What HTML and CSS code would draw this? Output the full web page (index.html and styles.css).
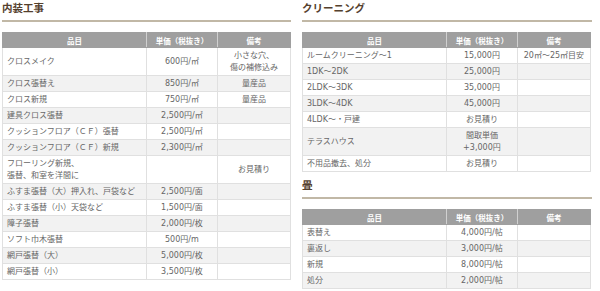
FILE: index.html
```html
<!DOCTYPE html>
<html lang="ja">
<head>
    <meta charset="UTF-8">
    <meta name="viewport" content="width=device-width, initial-scale=1.0">
    <title>料金表</title>
    <link rel="stylesheet" href="styles.css">
</head>
<body>
    <div class="price-page">
        <div class="price-column">
            <h2 class="section-title">内装工事</h2>
            <table class="price-table">
                <thead>
                    <tr><th class="col-item">品目</th><th class="col-price">単価（税抜き）</th><th class="col-note">備考</th></tr>
                </thead>
                <tbody>
                    <tr><td>クロスメイク</td><td class="center">600円/㎡</td><td class="center">小さな穴、<br>傷の補修込み</td></tr>
                    <tr><td>クロス張替え</td><td class="center">850円/㎡</td><td class="center">量産品</td></tr>
                    <tr><td>クロス新規</td><td class="center">750円/㎡</td><td class="center">量産品</td></tr>
                    <tr><td>建具クロス張替</td><td class="center">2,500円/㎡</td><td></td></tr>
                    <tr><td>クッションフロア（ＣＦ）張替</td><td class="center">2,500円/㎡</td><td></td></tr>
                    <tr><td>クッションフロア（ＣＦ）新規</td><td class="center">2,300円/㎡</td><td></td></tr>
                    <tr><td>フローリング新規、<br>張替、和室を洋間に</td><td></td><td class="center">お見積り</td></tr>
                    <tr><td>ふすま張替（大）押入れ、戸袋など</td><td class="center">2,500円/面</td><td></td></tr>
                    <tr><td>ふすま張替（小）天袋など</td><td class="center">1,500円/面</td><td></td></tr>
                    <tr><td>障子張替</td><td class="center">2,000円/枚</td><td></td></tr>
                    <tr><td>ソフト巾木張替</td><td class="center">500円/m</td><td></td></tr>
                    <tr><td>網戸張替（大）</td><td class="center">5,000円/枚</td><td></td></tr>
                    <tr><td>網戸張替（小）</td><td class="center">3,500円/枚</td><td></td></tr>
                </tbody>
            </table>
        </div>

        <div class="price-column">
            <h2 class="section-title">クリーニング</h2>
            <table class="price-table">
                <thead>
                    <tr><th class="col-item">品目</th><th class="col-price">単価（税抜き）</th><th class="col-note">備考</th></tr>
                </thead>
                <tbody>
                    <tr><td>ルームクリーニング～1</td><td class="center">15,000円</td><td class="center">20㎡～25㎡目安</td></tr>
                    <tr><td>1DK～2DK</td><td class="center">25,000円</td><td></td></tr>
                    <tr><td>2LDK～3DK</td><td class="center">35,000円</td><td></td></tr>
                    <tr><td>3LDK～4DK</td><td class="center">45,000円</td><td></td></tr>
                    <tr><td>4LDK～・戸建</td><td class="center">お見積り</td><td></td></tr>
                    <tr><td>テラスハウス</td><td class="center">間取単価<br>+3,000円</td><td></td></tr>
                    <tr><td>不用品撤去、処分</td><td class="center">お見積り</td><td></td></tr>
                </tbody>
            </table>

            <h2 class="section-title section-title-next">畳</h2>
            <table class="price-table">
                <thead>
                    <tr><th class="col-item">品目</th><th class="col-price">単価（税抜き）</th><th class="col-note">備考</th></tr>
                </thead>
                <tbody>
                    <tr><td>表替え</td><td class="center">4,000円/帖</td><td></td></tr>
                    <tr><td>裏返し</td><td class="center">3,000円/帖</td><td></td></tr>
                    <tr><td>新規</td><td class="center">8,000円/帖</td><td></td></tr>
                    <tr><td>処分</td><td class="center">2,000円/帖</td><td></td></tr>
                </tbody>
            </table>
        </div>
    </div>
</body>
</html>
```

FILE: styles.css
```css
* {
    margin: 0;
    padding: 0;
    box-sizing: border-box;
}

body {
    background-color: #ffffff;
    font-family: "DejaVu Sans", "Noto Sans CJK JP", sans-serif;
    color: #666;
}

.price-page {
    display: grid;
    grid-template-columns: 289px 290px;
    column-gap: 11px;
    padding-left: 2px;
}

.section-title {
    font-family: "Noto Sans CJK JP", sans-serif;
    font-size: 10.5px;
    font-weight: bold;
    line-height: 16px;
    color: #54402d;
    padding-bottom: 4px;
    border-bottom: 2px solid #c1b8a6;
    margin-bottom: 10px;
}

.section-title-next {
    margin-top: 5px;
}

.price-table {
    width: 289px;
    border-collapse: collapse;
    table-layout: fixed;
    font-size: 8px;
}

.price-table th {
    background-color: #9f9f9f;
    color: #fff;
    font-family: "Noto Sans CJK JP", sans-serif;
    font-size: 7.5px;
    font-weight: bold;
    line-height: 11px;
    padding: 2px 4px 1px;
    border: 1px solid #9f9f9f;
    border-right-color: #d0d0d0;
}

.price-table th:last-child {
    border-right-color: #9f9f9f;
}

.col-item {
    width: 50%;
}

.col-price {
    width: 24.6%;
}

.price-table td {
    line-height: 12px;
    padding: 2px 4px 1px;
    border: 1px solid #e0e0e0;
    vertical-align: middle;
    white-space: nowrap;
}

.price-table tbody tr:nth-child(even) td {
    background-color: #f2f2f2;
}

.center {
    text-align: center;
}
```
